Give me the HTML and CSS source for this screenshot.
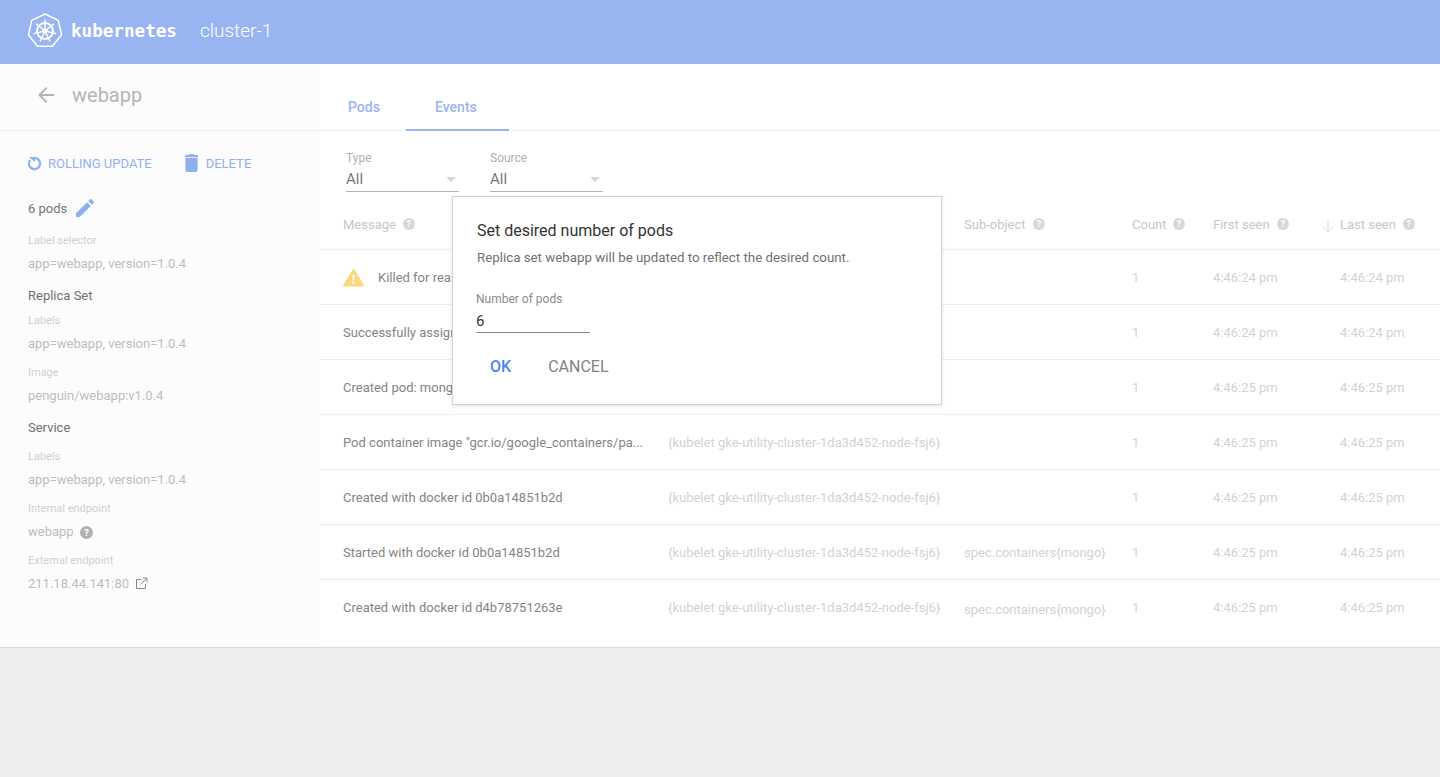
FILE: index.html
```html
<!DOCTYPE html>
<html lang="en">
<head>
<meta charset="utf-8">
<title>webapp - kubernetes</title>
<link rel="stylesheet" href="styles.css">
</head>
<body>
<header class="topbar">
  <svg class="logo" width="36" height="36" viewBox="0 0 36 36" fill="none" stroke="#fff">
    <path d="M18 1L31.300 7.400L34.600 21.800L25.400 33.300H10.600L1.400 21.800L4.700 7.400Z" stroke-width="1.500" stroke-linejoin="round"/>
    <circle cx="18" cy="18" r="8" stroke-width="2"/>
    <circle cx="18" cy="18" r="2.500" fill="#fff" stroke="none"/>
    <path d="M18 18V6.500M18 18L27 10.800M18 18L29.200 20.600M18 18L23 28.400M18 18L13 28.400M18 18L6.800 20.600M18 18L9 10.800" stroke-width="1.400"/>
  </svg>
  <span class="brand">kubernetes</span>
  <span class="cluster">cluster-1</span>
</header>
<main class="page">
  <aside class="sidebar">
    <div class="side-title">
      <svg class="back" width="24" height="24" viewBox="0 0 24 24"><path fill="#b4b4b4" d="M20 11H7.830l5.590-5.590L12 4l-8 8 8 8 1.410-1.410L7.830 13H20v-2z"/></svg>
      <span>webapp</span>
    </div>
    <div class="side-body">
      <div class="actions">
        <span class="action">
          <svg width="15" height="15" viewBox="0 0 16 16" fill="none"><path d="M8 2a6 6 0 1 1-4.800 2.400" stroke="#8fb0ef" stroke-width="2.400"/><path d="M2 1.400L8.500 1 8.500 6.500z" fill="#8fb0ef"/></svg>
          ROLLING UPDATE
        </span>
        <span class="action action-delete">
          <svg class="trash" width="15" height="19" viewBox="0 0 16 20"><path fill="#8fb0ef" d="M1.500 5h13v13a2 2 0 0 1-2 2h-9a2 2 0 0 1-2-2zM1 2h4l1-1h4l1 1h4v2H1z"/></svg>
          DELETE
        </span>
      </div>
      <div class="pods-line">6 pods
        <svg width="18" height="18" viewBox="0 0 18 18"><path fill="#8fb0ef" d="M0 14.200V18h3.800L14.800 6.900 11.100 3.200zM17.700 4a1 1 0 0 0 0-1.400L15.400.3a1 1 0 0 0-1.400 0l-1.800 1.800 3.700 3.700z"/></svg>
      </div>
      <div class="label lab-selector">Label selector</div>
      <div class="value val-selector">app=webapp, version=1.0.4</div>
      <div class="heading head-rs">Replica Set</div>
      <div class="label lab-labels">Labels</div>
      <div class="value val-labels">app=webapp, version=1.0.4</div>
      <div class="label lab-image">Image</div>
      <div class="value val-image">penguin/webapp:v1.0.4</div>
      <div class="heading head-svc">Service</div>
      <div class="label lab-svc">Labels</div>
      <div class="value val-svc">app=webapp, version=1.0.4</div>
      <div class="label lab-int">Internal endpoint</div>
      <div class="value val-int">webapp
        <svg class="help" width="13" height="13" viewBox="0 0 14 14"><circle cx="7" cy="7" r="7" fill="#b0b0b0"/><text x="7" y="10.500" class="help-q">?</text></svg>
      </div>
      <div class="label lab-ext">External endpoint</div>
      <div class="value val-ext">211.18.44.141:80
        <svg class="ext-icon" width="13" height="13" viewBox="0 0 13 13" fill="none" stroke="#8a8a8a" stroke-width="1"><path d="M6 2.500H1.500V11.500H10.500V7"/><path d="M5.500 7.500L11.500 1.500M7.500 1H12V5.500"/></svg>
      </div>
    </div>
  </aside>
  <section class="content">
    <nav class="tabs">
      <span class="tab">Pods</span>
      <span class="tab tab-active">Events</span>
    </nav>
    <div class="filters">
      <div class="filter">
        <div class="filter-label">Type</div>
        <div class="filter-box"><span>All</span><i class="caret"></i></div>
      </div>
      <div class="filter">
        <div class="filter-label">Source</div>
        <div class="filter-box"><span>All</span><i class="caret"></i></div>
      </div>
    </div>
    <div class="row row-head">
      <div>Message <svg class="hq" width="12" height="12" viewBox="0 0 14 14"><circle cx="7" cy="7" r="7" fill="#d8d8d8"/><text x="7" y="11" class="help-q">?</text></svg></div>
      <div>Source</div>
      <div>Sub-object <svg class="hq" width="12" height="12" viewBox="0 0 14 14"><circle cx="7" cy="7" r="7" fill="#d8d8d8"/><text x="7" y="11" class="help-q">?</text></svg></div>
      <div>Count <svg class="hq" width="12" height="12" viewBox="0 0 14 14"><circle cx="7" cy="7" r="7" fill="#d8d8d8"/><text x="7" y="11" class="help-q">?</text></svg></div>
      <div>First seen <svg class="hq" width="12" height="12" viewBox="0 0 14 14"><circle cx="7" cy="7" r="7" fill="#d8d8d8"/><text x="7" y="11" class="help-q">?</text></svg></div>
      <div class="last-head"><svg class="sort" width="12" height="14" viewBox="0 0 12 14" fill="none" stroke="#d4d4d4"><path d="M6 1V13M1 8l5 5 5-5"/></svg>Last seen <svg class="hq" width="12" height="12" viewBox="0 0 14 14"><circle cx="7" cy="7" r="7" fill="#d8d8d8"/><text x="7" y="11" class="help-q">?</text></svg></div>
    </div>
    <div class="row">
      <div class="msg msg-warn"><svg width="21" height="19" viewBox="0 0 22 20"><path fill="#f9d77f" stroke="#f9d77f" stroke-width="2" stroke-linejoin="round" d="M11 2L21 18.500H1z"/><path fill="#fff" d="M10 7h2v6h-2zM10 14.500h2v2h-2z"/></svg><span>Killed for reason</span></div>
      <div class="src"></div><div class="sub"></div><div class="num">1</div><div class="num">4:46:24 pm</div><div class="num">4:46:24 pm</div>
    </div>
    <div class="row">
      <div class="msg">Successfully assigned</div>
      <div class="src"></div><div class="sub"></div><div class="num">1</div><div class="num">4:46:24 pm</div><div class="num">4:46:24 pm</div>
    </div>
    <div class="row">
      <div class="msg">Created pod: mongo</div>
      <div class="src"></div><div class="sub"></div><div class="num">1</div><div class="num">4:46:25 pm</div><div class="num">4:46:25 pm</div>
    </div>
    <div class="row">
      <div class="msg">Pod container image "gcr.io/google_containers/pa...</div>
      <div class="src">{kubelet gke-utility-cluster-1da3d452-node-fsj6}</div><div class="sub"></div><div class="num">1</div><div class="num">4:46:25 pm</div><div class="num">4:46:25 pm</div>
    </div>
    <div class="row">
      <div class="msg">Created with docker id 0b0a14851b2d</div>
      <div class="src">{kubelet gke-utility-cluster-1da3d452-node-fsj6}</div><div class="sub"></div><div class="num">1</div><div class="num">4:46:25 pm</div><div class="num">4:46:25 pm</div>
    </div>
    <div class="row">
      <div class="msg">Started with docker id 0b0a14851b2d</div>
      <div class="src">{kubelet gke-utility-cluster-1da3d452-node-fsj6}</div><div class="sub">spec.containers{mongo}</div><div class="num">1</div><div class="num">4:46:25 pm</div><div class="num">4:46:25 pm</div>
    </div>
    <div class="row row-last">
      <div class="msg">Created with docker id d4b78751263e</div>
      <div class="src">{kubelet gke-utility-cluster-1da3d452-node-fsj6}</div><div class="sub sub-last">spec.containers{mongo}</div><div class="num">1</div><div class="num">4:46:25 pm</div><div class="num">4:46:25 pm</div>
    </div>
  </section>
  <div class="dialog">
    <h2 class="dialog-title">Set desired number of pods</h2>
    <p class="dialog-text">Replica set webapp will be updated to reflect the desired count.</p>
    <div class="field-label">Number of pods</div>
    <div class="field-input">6</div>
    <div class="dialog-actions">
      <span class="btn btn-ok">OK</span>
      <span class="btn btn-cancel">CANCEL</span>
    </div>
  </div>
</main>
</body>
</html>
```

FILE: styles.css
```css
* { box-sizing: border-box; }
html, body { margin: 0; height: 100%; }
body {
  background: #eeeeee;
  font-family: Roboto, "Liberation Sans", sans-serif;
  font-size: 13px;
  color: #6f6f6f;
  overflow: hidden;
}
.topbar {
  height: 64px;
  background: #98b5f1;
  display: flex;
  align-items: center;
  padding: 0 0 2px 27px;
  color: #fff;
}
.logo { flex: none; margin-bottom: 1px; }
.brand {
  font-family: "DejaVu Sans Mono", monospace;
  font-weight: 700;
  font-size: 17.6px;
  margin-left: 8px;
}
.cluster { font-size: 19px; font-weight: 300; margin: 0 0 2px 23px; }

.page {
  position: relative;
  display: flex;
  height: 584px;
  border-bottom: 1px solid #d9d9d9;
  background: #fff;
}
.sidebar { width: 320px; flex: none; background: #fcfcfc; }
.side-title {
  height: 67px;
  border-bottom: 1px solid #eeeeee;
  display: flex;
  align-items: center;
  padding: 0 0 4px 34px;
  font-size: 20px;
  color: #b4b4b4;
}
.back { margin-right: 14px; }
.side-body { padding: 20px 27px 0 28px; display: flex; flex-direction: column; align-items: flex-start; }
.actions { display: flex; align-items: center; height: 24px; color: #8fb0ef; margin-left: -1px; }
.action { display: flex; align-items: center; gap: 6px; font-size: 13px; }
.action-delete { margin-left: 32px; gap: 7px; }
.trash { margin-bottom: 2px; }
.pods-line { display: flex; align-items: center; gap: 9px; color: #757575; margin-top: 24px; height: 18px; }
.label { font-size: 11px; color: #d0d0d0; line-height: 14px; }
.value { font-size: 13px; color: #bdbdbd; line-height: 16px; display: flex; align-items: center; }
.heading { font-size: 13px; color: #707070; line-height: 16px; }
.lab-selector { margin-top: 17px; }
.val-selector { margin-top: 8px; }
.head-rs { margin-top: 16px; }
.lab-labels { margin-top: 10px; }
.val-labels { margin-top: 8px; }
.lab-image { margin-top: 14px; }
.val-image { margin-top: 8px; }
.head-svc { margin-top: 16px; }
.lab-svc { margin-top: 14px; }
.val-svc { margin-top: 8px; }
.lab-int { margin-top: 14px; }
.val-int { margin-top: 8px; gap: 6px; }
.lab-ext { margin-top: 14px; }
.val-ext { margin-top: 8px; gap: 6px; }
.ext-icon { margin-bottom: 2px; }
.help-q { font-family: Roboto, sans-serif; font-size: 10px; font-weight: 700; fill: #fff; text-anchor: middle; }

.content { flex: 1; min-width: 0; }
.tabs {
  height: 67px;
  border-bottom: 1px solid #eeeeee;
  display: flex;
  align-items: flex-end;
  padding-left: 28px;
}
.tab {
  color: #98b5f1;
  font-size: 14px;
  font-weight: 500;
  height: 45px;
  padding-top: 13px;
  margin-bottom: -1px;
}
.tab-active {
  margin-left: 26px;
  width: 103px;
  padding-right: 3px;
  text-align: center;
  border-bottom: 2px solid #98b5f1;
}
.filters { display: flex; padding: 20px 0 0 26px; height: 66px; gap: 31px; }
.filter { width: 113px; }
.filter-label { font-size: 12px; color: #b0b0b0; line-height: 14px; }
.filter-box {
  height: 27px;
  border-bottom: 1px solid #b4b4b4;
  display: flex;
  justify-content: space-between;
  align-items: center;
  padding-top: 2px;
  font-size: 15px;
  color: #7a7a7a;
}
.caret {
  width: 0; height: 0;
  border-left: 5.500px solid transparent;
  border-right: 5.500px solid transparent;
  border-top: 5.500px solid #d6d6d6;
  margin-right: 3px;
}
.row {
  display: grid;
  grid-template-columns: 325px 296px 168px 81px 127px 1fr;
  align-items: center;
  height: 55px;
  padding-left: 23px;
  border-bottom: 1px solid #eeeeee;
  color: #d2d2d2;
}
.row-head { height: 53px; padding-top: 2px; font-size: 13px; color: #c6c6c6; }
.row-head > div { display: flex; align-items: center; gap: 6px; white-space: nowrap; }
.row-head .hq { margin-left: 1px; }
.row-last { height: 68px; border-bottom: 0; padding-bottom: 13px; }
.last-head { position: relative; }
.sort { position: absolute; left: -18px; top: 2px; }
.msg { color: #848484; white-space: nowrap; overflow: hidden; }
.msg-warn { display: flex; align-items: center; gap: 14px; }
.src, .sub { white-space: nowrap; }
.sub-last { padding-top: 4px; }

.dialog {
  position: absolute;
  left: 452px;
  top: 132px;
  width: 490px;
  height: 209px;
  background: #fff;
  border: 1px solid #d3d3d3;
  box-shadow: 0 1px 4px rgba(0,0,0,.12);
  padding: 24px 24px 0;
}
.dialog-title { margin: 0; font-size: 16px; font-weight: 400; color: #333; line-height: 19px; }
.dialog-text { margin: 10px 0 0; font-size: 13.3px; color: #707070; line-height: 16px; }
.field-label { margin: 26px 0 0 -1px; font-size: 12px; color: #8a8a8a; line-height: 14px; }
.field-input {
  width: 114px;
  height: 27px;
  margin-left: -1px;
  padding-top: 6px;
  font-size: 15px;
  line-height: 18px;
  color: #333;
  border-bottom: 1px solid #8a8a8a;
}
.dialog-actions { display: flex; align-items: center; margin-top: 24px; padding-left: 13px; gap: 37px; }
.btn { font-size: 16px; line-height: 20px; }
.btn-ok { color: #4d84ee; font-weight: 500; }
.btn-cancel { color: #828282; }
```
